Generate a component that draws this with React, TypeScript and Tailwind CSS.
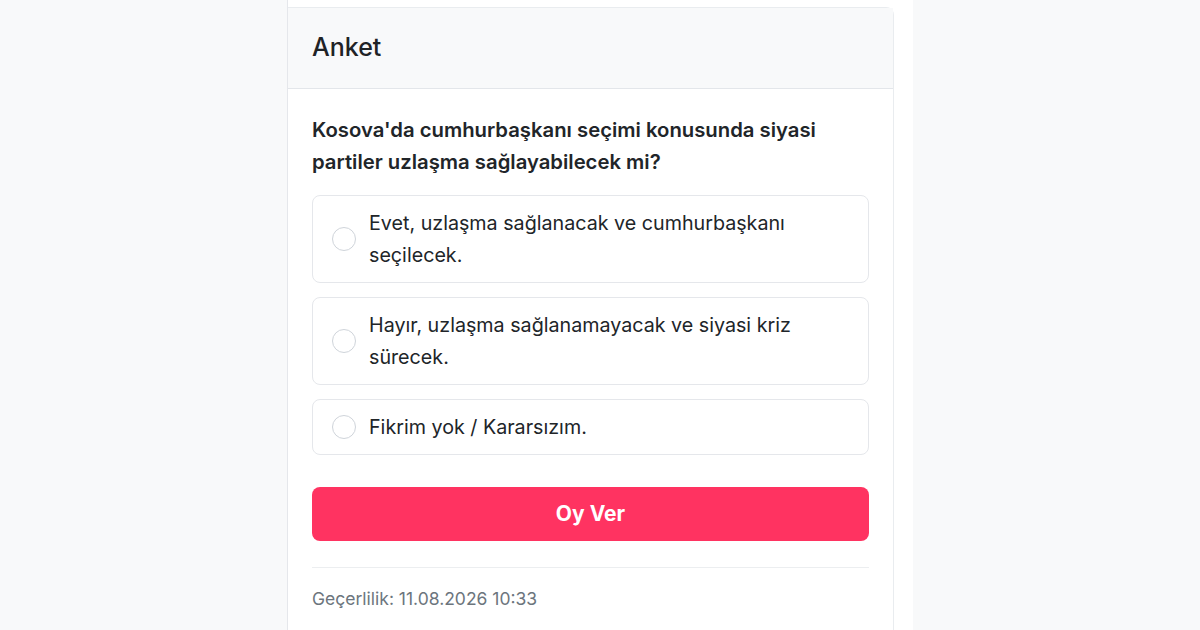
const options = [
  "Evet, uzlaşma sağlanacak ve cumhurbaşkanı seçilecek.",
  "Hayır, uzlaşma sağlanamayacak ve siyasi kriz sürecek.",
  "Fikrim yok / Kararsızım.",
];

export default function App() {
  return (
    <div
      className="flex h-[630px] w-[1200px] overflow-hidden bg-[#f8f9fa]"
      style={{ fontFamily: "Inter, 'Noto Sans', sans-serif" }}
    >
      <div className="w-[287px] shrink-0" />
      <div className="flex w-[626px] shrink-0 flex-col border-l border-[#e5e7eb] bg-white pt-[7px]">
        <div className="w-[606px] flex-1 rounded-tr-lg border-t border-r border-[#e9ecef]">
          <div className="flex h-[81px] items-center border-b border-[#e3e6ea] bg-[#f8f9fa] px-6">
            <h2 className="text-[25px] font-medium text-[#1f2326]">Anket</h2>
          </div>
          <div className="px-6 pt-[25px]">
            <p className="pr-6 text-[20.3px] font-semibold leading-8 text-[#212529]">
              Kosova'da cumhurbaşkanı seçimi konusunda siyasi partiler uzlaşma sağlayabilecek mi?
            </p>
            <div className="mt-[17px] flex flex-col gap-[14px]">
              {options.map((o) => (
                <label
                  key={o}
                  className="flex items-center gap-[13px] rounded-lg border border-[#e5e7eb] py-[11px] pl-[19px] pr-10"
                >
                  <span className="h-6 w-6 shrink-0 rounded-full border border-[#cfd4da] bg-white" />
                  <span className="text-[19.7px] leading-8 text-[#212529]">{o}</span>
                </label>
              ))}
            </div>
            <button className="mt-8 flex h-[54px] w-full items-center justify-center rounded-lg bg-[#ff3361] text-[21px] font-bold text-white">
              Oy Ver
            </button>
            <div className="mt-[26px] border-t border-[#eceef0] pt-[19px]">
              <p className="text-[17.5px] leading-6 text-[#6c757d]">Geçerlilik: 11.08.2026 10:33</p>
            </div>
          </div>
        </div>
      </div>
    </div>
  );
}
